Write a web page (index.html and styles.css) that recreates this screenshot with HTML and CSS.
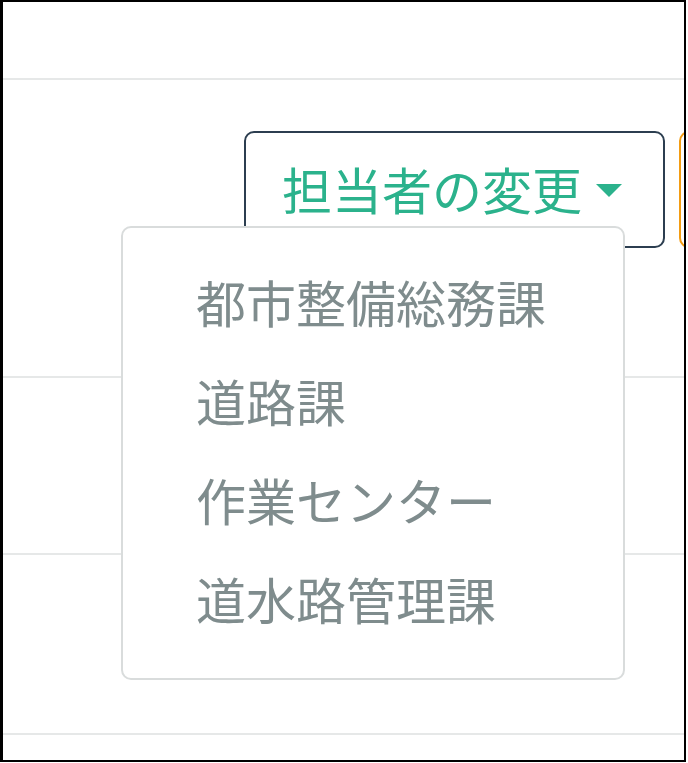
FILE: index.html
```html
<!DOCTYPE html>
<html lang="ja">
<head>
	<meta charset="utf-8">
	<title>担当者の変更</title>
	<link rel="stylesheet" href="styles.css">
</head>
<body>
<div class="frame">
	<div class="row row-head"></div>
	<div class="row row-actions">
		<div class="dropdown">
			<button class="btn btn-assign" type="button">担当者の変更<span class="caret"></span></button>
			<ul class="dropdown-menu">
				<li>都市整備総務課</li>
				<li>道路課</li>
				<li>作業センター</li>
				<li>道水路管理課</li>
			</ul>
		</div>
		<button class="btn btn-warning" type="button"></button>
	</div>
	<div class="row row-mid"></div>
	<div class="row row-low"></div>
</div>
</body>
</html>
```

FILE: styles.css
```css
body {
	margin: 0;
	padding: 0;
	background: #fff;
	font-family: "Noto Sans CJK JP", sans-serif;
}

.frame {
	position: relative;
	width: 686px;
	height: 762px;
	box-sizing: border-box;
	border: 2px solid #000;
	border-left-width: 3px;
	overflow: hidden;
}

.row {
	border-bottom: 2px solid #e6e8e8;
}

.row-head {
	height: 76px;
}

.row-actions {
	display: flex;
	gap: 14px;
	height: 245px;
	padding: 51px 0 0 241px;
}

.row-mid {
	height: 175px;
}

.row-low {
	height: 178px;
}

.dropdown {
	position: relative;
	flex-shrink: 0;
}

.btn {
	display: flex;
	align-items: center;
	height: 117px;
	box-sizing: border-box;
	background: #fff;
	border-radius: 10px;
	font: inherit;
	font-size: 50px;
	line-height: 1;
	white-space: nowrap;
}

.btn-assign {
	padding: 0 41px 4px 36px;
	border: 2px solid #2c3e50;
	color: #2bb28c;
}

.caret {
	margin-left: 14px;
	margin-top: 6px;
	border-top: 13px solid #2bb28c;
	border-left: 13px solid transparent;
	border-right: 13px solid transparent;
}

.btn-warning {
	width: 100px;
	flex-shrink: 0;
	border: 2px solid #f39c12;
}

.dropdown-menu {
	position: absolute;
	top: 95px;
	left: -123px;
	z-index: 2;
	width: 504px;
	box-sizing: border-box;
	margin: 0;
	padding: 24px 0 30px;
	list-style: none;
	background: #fff;
	border: 2px solid #d9dcdc;
	border-radius: 10px;
}

.dropdown-menu li {
	height: 99px;
	line-height: 99px;
	padding-left: 73px;
	font-size: 50px;
	color: #7f8c8d;
	white-space: nowrap;
}
```
